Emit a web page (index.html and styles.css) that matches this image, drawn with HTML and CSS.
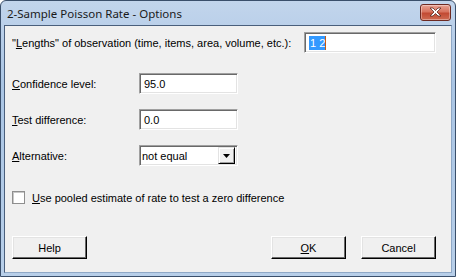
FILE: index.html
```html
<!DOCTYPE html>
<html lang="en">
<head>
    <meta charset="UTF-8">
    <title>2-Sample Poisson Rate - Options</title>
    <link rel="stylesheet" href="styles.css">
</head>
<body>
    <div class="window">
        <div class="titlebar">
            <span class="title">2-Sample Poisson Rate - Options</span>
            <button class="close-btn" aria-label="Close">
                <svg width="13" height="10" viewBox="0 0 13 10">
                    <path d="M1 1 L4 1 L6.5 3.5 L9 1 L12 1 L8 5 L12 9 L9 9 L6.5 6.5 L4 9 L1 9 L5 5 Z" fill="#fff" stroke="#5a2a22" stroke-width="0.8"/>
                </svg>
            </button>
        </div>

        <div class="client">
            <div class="row row-lengths">
                <label class="label wide">"<u>L</u>engths" of observation (time, items, area, volume, etc.):</label>
                <div class="field long"><span class="sel">1 2</span></div>
            </div>

            <div class="row row-gap-first">
                <label class="label"><u>C</u>onfidence level:</label>
                <div class="field">95.0</div>
            </div>

            <div class="row row-gap">
                <label class="label"><u>T</u>est difference:</label>
                <div class="field">0.0</div>
            </div>

            <div class="row row-gap">
                <label class="label"><u>A</u>lternative:</label>
                <div class="combo">
                    <span class="combo-text">not equal</span>
                    <span class="combo-btn">
                        <svg width="7" height="4" viewBox="0 0 7 4"><path d="M0 0 H7 L3.5 4 Z" fill="#000"/></svg>
                    </span>
                </div>
            </div>

            <div class="check-row">
                <span class="checkbox"></span>
                <span class="check-label"><u>U</u>se pooled estimate of rate to test a zero difference</span>
            </div>

            <div class="buttons">
                <button class="btn">Help</button>
                <span class="spacer"></span>
                <button class="btn"><u>O</u>K</button>
                <button class="btn">Cancel</button>
            </div>
        </div>
    </div>
</body>
</html>
```

FILE: styles.css
```css
body {
    margin: 0;
    background: #fff;
    font-family: "Liberation Sans", Arial, sans-serif;
}

.window {
    width: 456px;
    height: 277px;
    box-sizing: border-box;
    border: 1px solid #3a4f6b;
    border-radius: 6px 6px 0 0;
    background: linear-gradient(180deg, #c2d5ec 0%, #aac5e4 30%, #b8cfe9 100%);
    display: flex;
    flex-direction: column;
    overflow: hidden;
}

.titlebar {
    height: 24px;
    display: flex;
    align-items: center;
    padding: 0 3px 0 6px;
    flex-shrink: 0;
}

.title {
    font-family: "Noto Sans", sans-serif;
    font-size: 11.5px;
    color: #1a1a1a;
    flex: 1;
    padding-top: 1px;
}

.close-btn {
    width: 31px;
    height: 17px;
    margin-top: -2px;
    margin-right: 1px;
    padding: 0;
    border: 1px solid #6d2a22;
    border-radius: 3px;
    background: linear-gradient(180deg, #e8a293 0%, #d8735e 45%, #c24a33 55%, #cf6b52 100%);
    box-shadow: inset 0 0 0 1px rgba(255,255,255,0.35);
    display: flex;
    align-items: center;
    justify-content: center;
}

.client {
    flex: 1;
    margin: 0 3px 3px 3px;
    border: 1px solid #4a5f7c;
    border-right-color: #8fa8c6;
    border-bottom-color: #8fa8c6;
    background: #f0f0f0;
    padding: 6px 15px 0 7px;
    font-size: 11px;
    color: #000;
    display: flex;
    flex-direction: column;
}

.row {
    display: flex;
    align-items: center;
    height: 21px;
}

.row-gap-first {
    margin-top: 20px;
}

.row-gap {
    margin-top: 15px;
}

.label {
    width: 127px;
    flex-shrink: 0;
}

.label.wide {
    width: auto;
    flex: 1;
}

u {
    text-decoration: underline;
    text-underline-offset: 1px;
}

.field {
    width: 99px;
    height: 21px;
    box-sizing: border-box;
    background: #fff;
    border: 1px solid;
    border-color: #a0a0a0 #fff #fff #a0a0a0;
    box-shadow: inset 1px 1px 0 #696969, inset -1px -1px 0 #e3e3e3;
    padding: 3px 4px 0 4px;
    line-height: 14px;
}

.field.long {
    width: 132px;
}

.sel {
    background: #3399ff;
    color: #fff;
    border-right: 1px solid #c55a11;
    padding: 0 0 0 1px;
    display: inline-block;
    line-height: 14px;
}

.combo {
    width: 99px;
    height: 21px;
    box-sizing: border-box;
    background: #fff;
    border: 1px solid;
    border-color: #a0a0a0 #fff #fff #a0a0a0;
    box-shadow: inset 1px 1px 0 #696969, inset -1px -1px 0 #e3e3e3;
    display: flex;
    align-items: center;
    padding: 2px 2px 2px 2px;
}

.combo-text {
    flex: 1;
    padding-left: 0;
}

.combo-btn {
    width: 17px;
    height: 17px;
    box-sizing: border-box;
    background: #f0f0f0;
    border: 1px solid;
    border-color: #e3e3e3 #000 #000 #e3e3e3;
    box-shadow: inset 1px 1px 0 #fff, inset -1px -1px 0 #a0a0a0;
    display: flex;
    align-items: center;
    justify-content: center;
}

.check-row {
    display: flex;
    align-items: center;
    margin-top: 25px;
    height: 13px;
}

.checkbox {
    width: 13px;
    height: 13px;
    box-sizing: border-box;
    background: #fff;
    border: 1px solid #8f8f8f;
    box-shadow: inset 1px 1px 0 #c8c8c8;
    margin-right: 7px;
}

.buttons {
    display: flex;
    margin-top: 32px;
    gap: 15px;
}

.spacer {
    flex: 1;
}

.btn {
    width: 75px;
    height: 23px;
    box-sizing: border-box;
    font-family: "Liberation Sans", Arial, sans-serif;
    font-size: 11px;
    color: #000;
    background: #f0f0f0;
    border: 1px solid;
    border-color: #fff #000 #000 #fff;
    box-shadow: inset -1px -1px 0 #696969, inset 1px 1px 0 #e3e3e3;
    padding: 0;
}
```
